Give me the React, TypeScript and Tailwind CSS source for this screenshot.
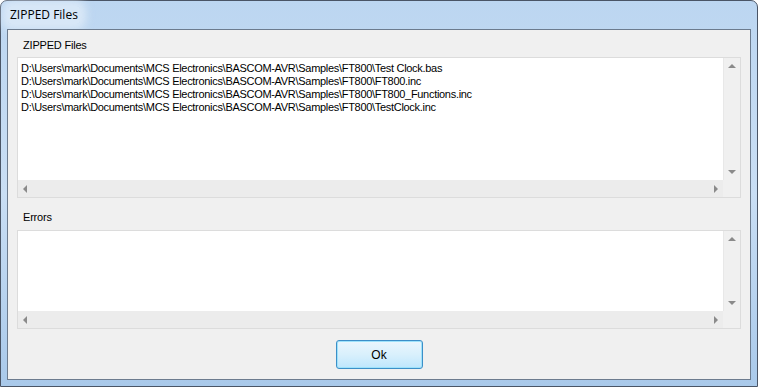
import {Fragment} from "react";

const files = [
  "D:\\Users\\mark\\Documents\\MCS Electronics\\BASCOM-AVR\\Samples\\FT800\\Test Clock.bas",
  "D:\\Users\\mark\\Documents\\MCS Electronics\\BASCOM-AVR\\Samples\\FT800\\FT800.inc",
  "D:\\Users\\mark\\Documents\\MCS Electronics\\BASCOM-AVR\\Samples\\FT800\\FT800_Functions.inc",
  "D:\\Users\\mark\\Documents\\MCS Electronics\\BASCOM-AVR\\Samples\\FT800\\TestClock.inc",
];

const Arrow = ({dir}: {dir: "up" | "down" | "left" | "right"}) => {
  const pts = {
    up: "0,4 4,0 8,4",
    down: "0,0 8,0 4,4",
    left: "4,0 4,8 0,4",
    right: "0,0 0,8 4,4",
  }[dir];
  const size = dir === "up" || dir === "down" ? "w-[8px] h-[4px]" : "w-[4px] h-[8px]";
  const vb = dir === "up" || dir === "down" ? "0 0 8 4" : "0 0 4 8";
  return (
    <svg viewBox={vb} className={size}>
      <polygon points={pts} fill="#8a8a8a" />
    </svg>
  );
};

const ListBox = ({lines, height}: {lines: string[]; height: string}) => {
  return (
    <div className={`mx-[9px] border border-[#dcdcdc] bg-white flex flex-col ${height}`}>
      <div className="flex flex-1 min-h-0">
        <div className="flex-1 pl-[3px] pt-[4px] text-[11px] leading-[13px] tracking-[-0.3px] text-black whitespace-nowrap overflow-hidden">
          {lines.map((l, i) => (
            <div key={i}>{l}</div>
          ))}
        </div>
        <div className="w-[17px] bg-[#f0f0f0] border-l border-[#e8e8e8] flex flex-col items-center justify-between py-[6px]">
          <Arrow dir="up" />
          <Arrow dir="down" />
        </div>
      </div>
      <div className="h-[17px] flex">
        <div className="flex-1 bg-[#ececec] flex items-center justify-between px-[5px]">
          <Arrow dir="left" />
          <Arrow dir="right" />
        </div>
        <div className="w-[17px] bg-[#f0f0f0]" />
      </div>
    </div>
  );
};

export default function App() {
  return (
    <div
      className="w-[758px] h-[387px] overflow-hidden bg-white"
      style={{fontFamily: '"Liberation Sans", Arial, sans-serif'}}
    >
      <div className="w-full h-full rounded-t-[7px] border border-[#4a5566] bg-gradient-to-b from-[#bcd6f1] via-[#c9def4] to-[#a9c9ea] flex flex-col px-[6px] pb-[6px]">
        <div className="h-[28px] flex items-center pl-[1px]">
          <span
            className="text-[12px] text-black px-[2px] rounded bg-[#e3eefa]/70 shadow-[0_0_8px_6px_rgba(230,240,250,0.7)]"
            style={{fontFamily: '"Open Sans", "Noto Sans", sans-serif'}}
          >
            ZIPPED Files
          </span>
        </div>
        <div className="flex-1 border border-[#6c7b8e] bg-[#f0f0f0] flex flex-col">
          <Fragment>
            <div className="pl-[15px] pt-[7px] h-[27px] text-[11px] tracking-[-0.2px] text-black">ZIPPED Files</div>
            <ListBox lines={files} height="h-[141px]" />
            <div className="pl-[15px] pt-[11px] h-[32px] text-[11px] tracking-[-0.2px] text-black">Errors</div>
            <ListBox lines={[]} height="h-[99px]" />
          </Fragment>
          <div className="flex justify-center pt-[11px]">
            <button className="w-[87px] h-[29px] rounded-[3px] border border-[#3c8fc8] shadow-[inset_0_0_0_1px_#9ee2fb] bg-gradient-to-b from-[#eaf6fd] via-[#d9f0fc] to-[#bee6fd] text-[12px] text-black">
              Ok
            </button>
          </div>
        </div>
      </div>
    </div>
  );
}
